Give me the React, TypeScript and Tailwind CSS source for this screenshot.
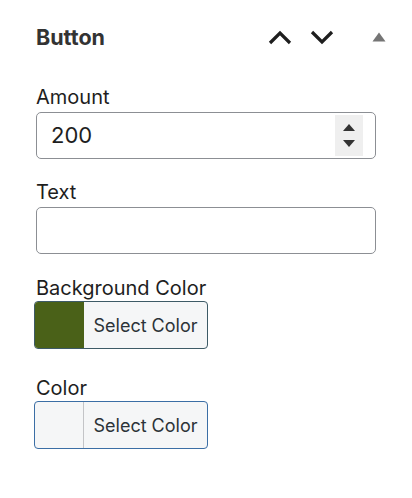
import React from 'react';

function ColorField({ label, swatch, border, className }: { label: string; swatch?: string; border: string; className: string }) {
    return (
        <div className={className}>
            <div className="text-[20px] leading-6 text-[#1e1e1e]">{label}</div>
            <div
                className={`mt-[1px] -ml-[2px] flex h-[48px] w-[174px] overflow-hidden rounded-[4px] border-[1.5px] bg-[#f5f6f7] ${border}`}
            >
                <div
                    className="w-[49px] border-r border-[#c3c4c7]"
                    style={swatch ? { backgroundColor: swatch, borderColor: swatch } : undefined}
                />
                <div className="flex flex-1 items-center justify-center text-[18px] text-[#2c3338]">Select Color</div>
            </div>
        </div>
    );
}

export default function App() {
    return (
        <div className="h-[498px] w-[412px] bg-white px-9 pt-[23px] font-['Inter',sans-serif] text-[#1e1e1e]">
            {/* Header */}
            <div className="flex h-7 items-center">
                <h2 className="flex-1 text-[21.5px] font-bold text-[#333]">Button</h2>
                <svg width="24" height="16" viewBox="0 0 24 16" className="mr-[18px] ml-[2px]">
                    <path d="M2 14 L12 4 L22 14" fill="none" stroke="#1e1e1e" strokeWidth="3.2" />
                </svg>
                <svg width="24" height="16" viewBox="0 0 24 16" className="mr-[38px]">
                    <path d="M2 3 L12 13 L22 3" fill="none" stroke="#1e1e1e" strokeWidth="3.2" />
                </svg>
                <svg width="14" height="10" viewBox="0 0 14 10" className="mr-[-10px]">
                    <path d="M0.5 9.5 L7 0.5 L13.5 9.5 Z" fill="#757575" />
                </svg>
            </div>

            {/* Amount */}
            <div className="mt-[34px] text-[20px] leading-6">Amount</div>
            <div className="mt-[3px] flex h-[47px] items-center rounded-[5px] border border-[#8c8f94] pl-[14px] pr-3">
                <span className="flex-1 text-[22px]">200</span>
                <div className="flex h-[41px] w-[28px] flex-col items-center justify-center gap-[9px] bg-[#efefef]">
                    <svg width="12" height="7" viewBox="0 0 12 7">
                        <path d="M0 7 L6 0 L12 7 Z" fill="#333" />
                    </svg>
                    <svg width="12" height="7" viewBox="0 0 12 7">
                        <path d="M0 0 L6 7 L12 0 Z" fill="#333" />
                    </svg>
                </div>
            </div>

            {/* Text */}
            <div className="mt-[21px] text-[20px] leading-6">Text</div>
            <div className="mt-[3px] h-[47px] rounded-[5px] border border-[#8c8f94]" />

            <ColorField className="mt-[22px]" label="Background Color" swatch="#4a6118" border="border-[#3d5a66]" />
            <ColorField className="mt-[27px]" label="Color" border="border-[#3b6ea5]" />
        </div>
    );
}
